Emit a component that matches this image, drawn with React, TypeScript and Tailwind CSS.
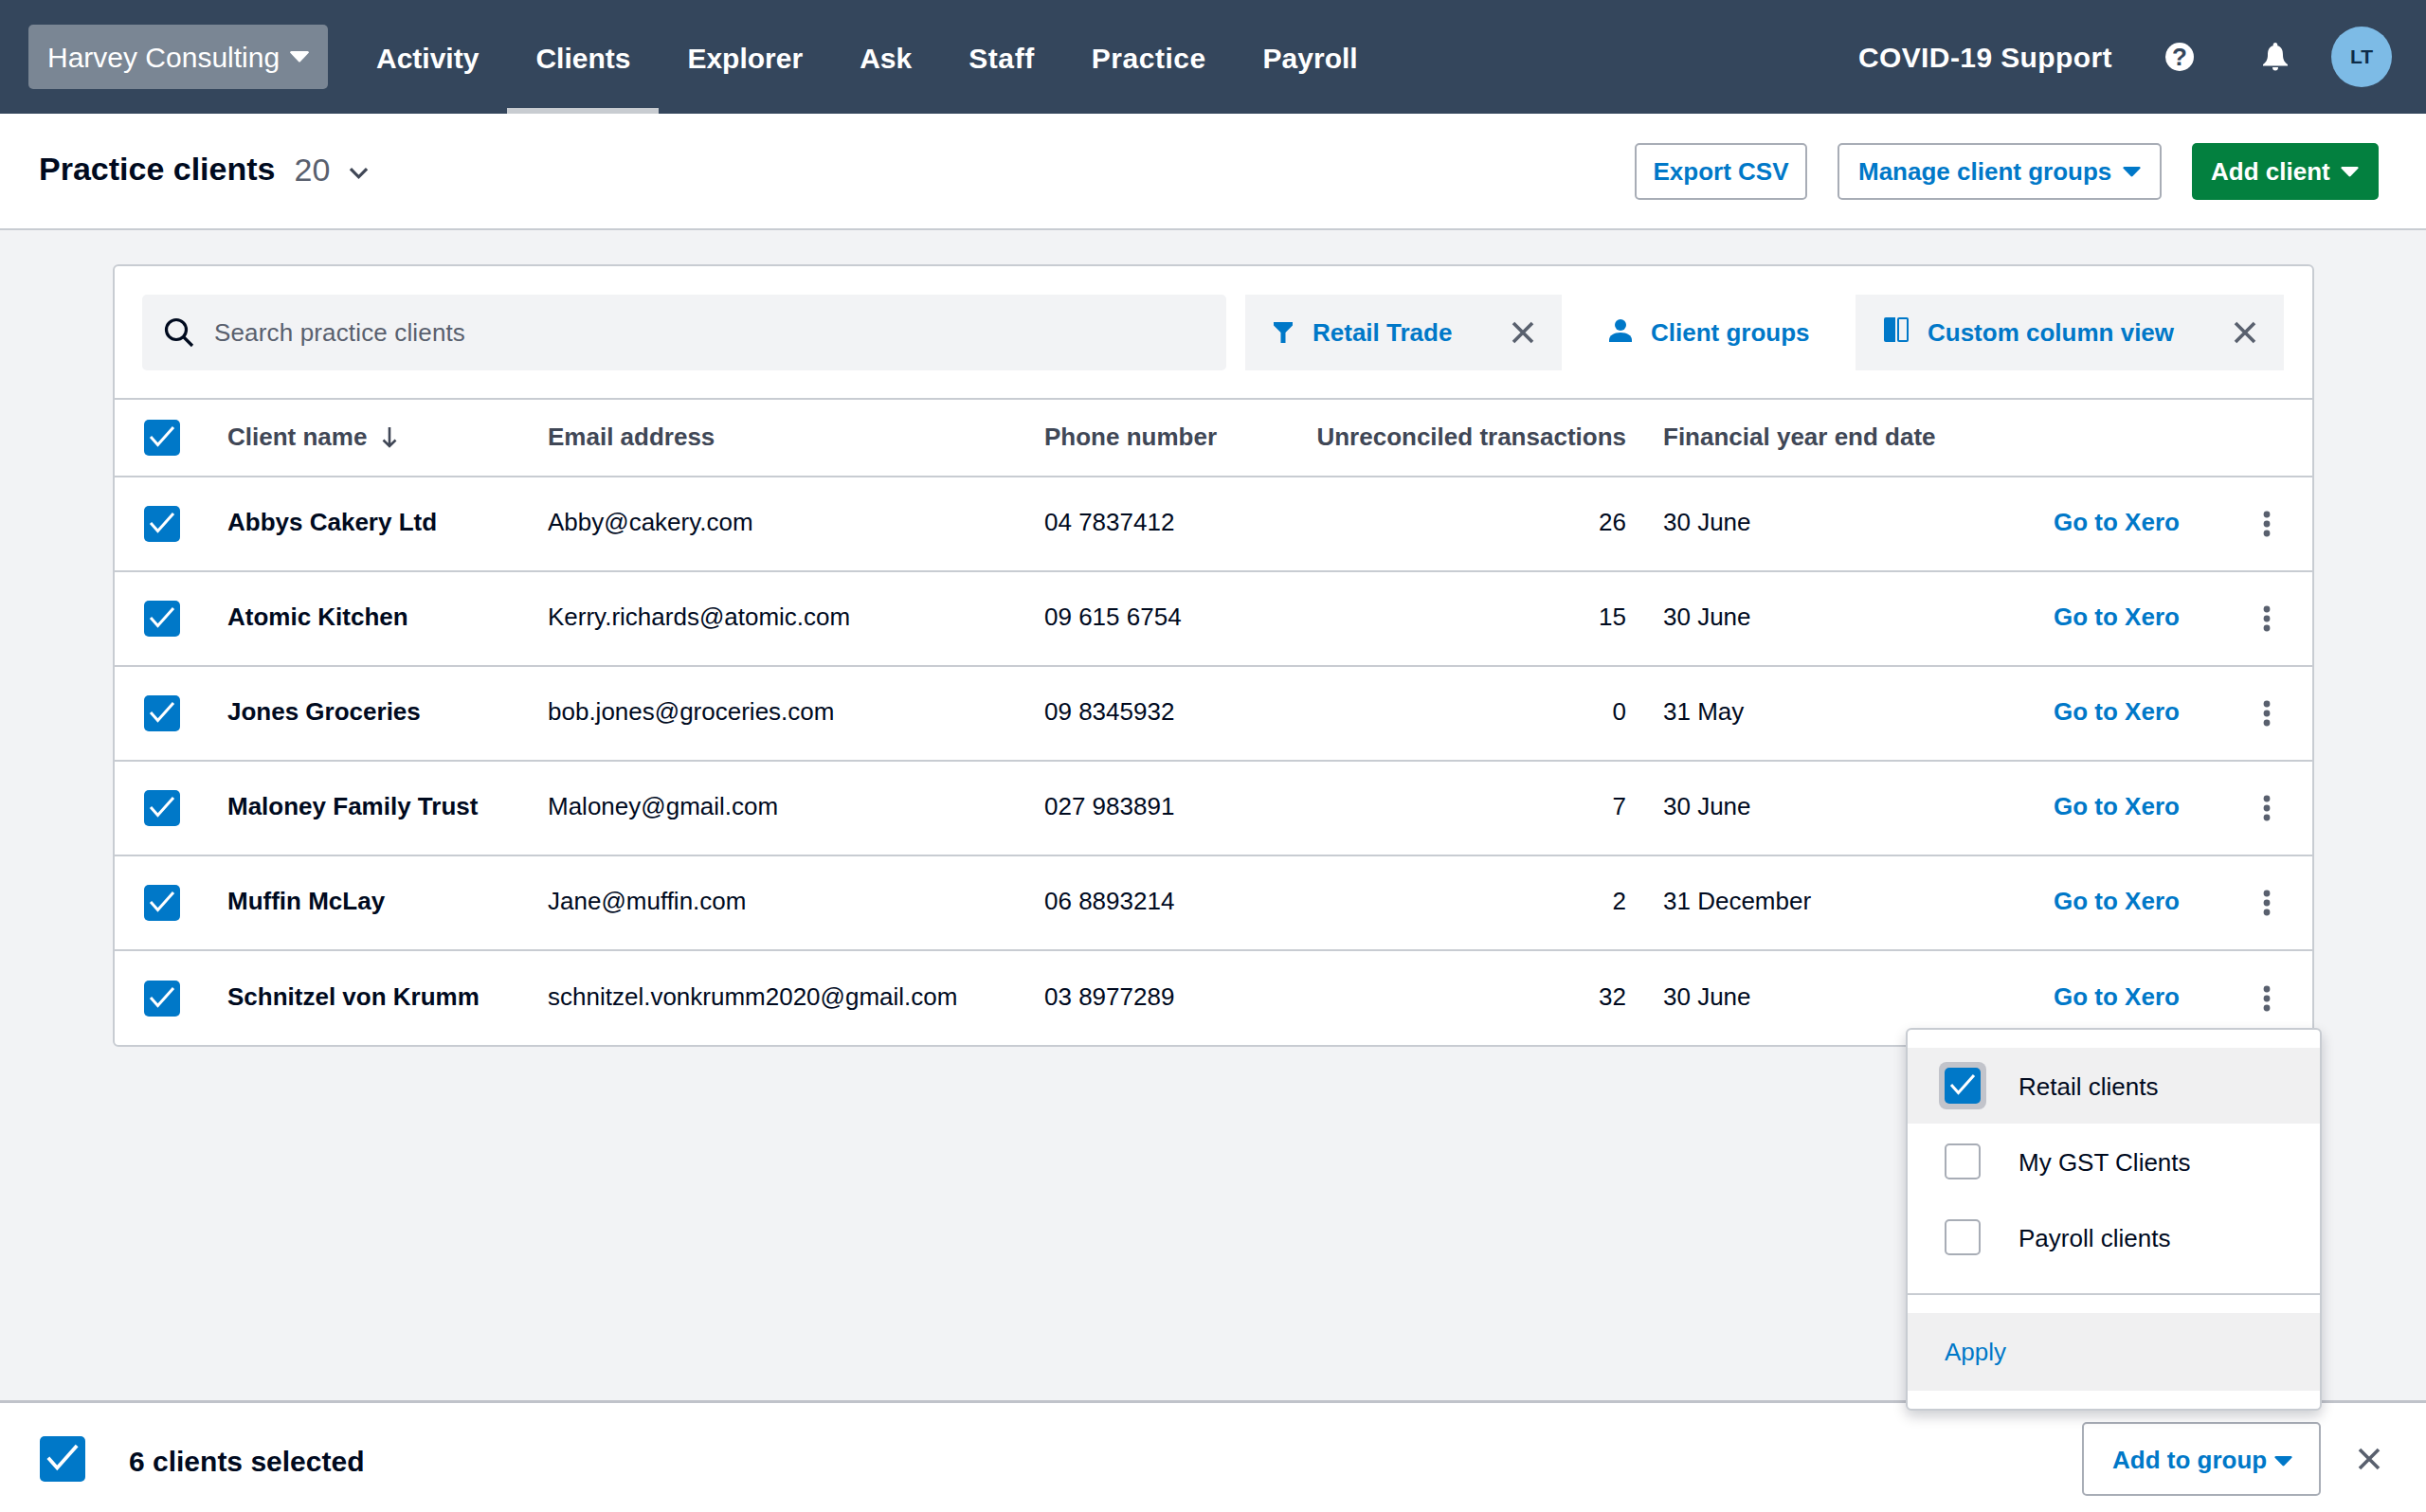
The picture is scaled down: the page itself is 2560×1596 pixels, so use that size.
const rows = [
  { name: "Abbys Cakery Ltd", email: "Abby@cakery.com", phone: "04 7837412", count: 26, yearEnd: "30 June" },
  { name: "Atomic Kitchen", email: "Kerry.richards@atomic.com", phone: "09 615 6754", count: 15, yearEnd: "30 June" },
  { name: "Jones Groceries", email: "bob.jones@groceries.com", phone: "09 8345932", count: 0, yearEnd: "31 May" },
  { name: "Maloney Family Trust", email: "Maloney@gmail.com", phone: "027 983891", count: 7, yearEnd: "30 June" },
  { name: "Muffin McLay", email: "Jane@muffin.com", phone: "06 8893214", count: 2, yearEnd: "31 December" },
  { name: "Schnitzel von Krumm", email: "schnitzel.vonkrumm2020@gmail.com", phone: "03 8977289", count: 32, yearEnd: "30 June" },
];

const NAV_ITEMS = ["Activity", "Clients", "Explorer", "Ask", "Staff", "Practice", "Payroll"];

function Check({ size = 38 }: { size?: number }) {
  return (
    <span
      className="flex shrink-0 items-center justify-center rounded-[5px] bg-[#0078c8]"
      style={{ width: size, height: size }}
    >
      <svg viewBox="0 0 38 38" className="h-full w-full" fill="none">
        <path d="M7 18l7.500 8.500L31 8" stroke="#fff" strokeWidth="3" />
      </svg>
    </span>
  );
}

function Caret({ color = "#fff", className = "" }: { color?: string; className?: string }) {
  return (
    <svg viewBox="0 0 20 12" className={className} fill={color}>
      <path d="M0 1.500Q0 0 1.500 0h17Q20 0 20 1.500L11 11q-1 1-2 0z" />
    </svg>
  );
}

function Close({ className = "" }: { className?: string }) {
  return (
    <svg viewBox="0 0 24 24" className={className} fill="none" stroke="#59606e" strokeWidth="3.600">
      <path d="M2 2l20 20M22 2L2 22" />
    </svg>
  );
}

function Dots() {
  return (
    <svg viewBox="0 0 8 28" className="h-[28px] w-[8px]" fill="#59606e">
      <circle cx="4" cy="4" r="3.400" />
      <circle cx="4" cy="14" r="3.400" />
      <circle cx="4" cy="24" r="3.400" />
    </svg>
  );
}

function GroupOption({ label, checked, active }: { label: string; checked?: boolean; active?: boolean }) {
  return (
    <div className={`flex h-[80px] items-center pl-[39px] ${active ? "bg-[#f0f0f1]" : ""}`}>
      {checked ? (
        <span className="rounded-[8px] bg-[#c2c4cb] p-[6px] -ml-[6px] -mr-[6px]">
          <Check />
        </span>
      ) : (
        <span className="h-[38px] w-[38px] rounded-[5px] border-2 border-[#a8adb6] bg-white" />
      )}
      <span className="ml-[40px] mt-[2px] text-[26px] text-[#000a1e]">{label}</span>
    </div>
  );
}

export default function App() {
  return (
    <div className="relative flex h-[1596px] w-[2560px] flex-col overflow-hidden bg-[#f2f3f5] font-['Liberation_Sans',Arial,sans-serif]">
      <header className="flex h-[120px] shrink-0 items-center bg-[#34465c] text-white">
        <button className="ml-[30px] flex h-[68px] w-[316px] items-center rounded-[5px] bg-[#7a8694] pl-[20px] text-[30px]">
          Harvey Consulting
          <Caret className="ml-[11px] h-[12px] w-[20px]" />
        </button>
        <nav className="ml-[21px] flex h-full">
          {NAV_ITEMS.map((item) => (
            <a
              key={item}
              className={`flex h-full items-center px-[30px] text-[30px] font-bold ${
                item === "Clients" ? "border-b-[6px] border-[#c8ccd1] pt-[8px]" : "pt-[2px]"
              } ${item === "Practice" ? "tracking-[0.5px]" : ""} ${item === "Staff" ? "tracking-[0.6px]" : ""}`}
            >
              {item}
            </a>
          ))}
        </nav>
        <div className="ml-auto flex items-center pr-[36px]">
          <span className="text-[30px] font-bold tracking-[0.4px]">COVID-19 Support</span>
          <span className="ml-[56px] flex h-[30px] w-[30px] items-center justify-center rounded-full bg-white text-[26px] font-bold leading-none text-[#34465c]">
            ?
          </span>
          <svg viewBox="0 0 26 30" className="ml-[73px] h-[30px] w-[26px]" fill="#fff">
            <path d="M13 0c1.500 0 2.300 1 2.300 2.600v.6C20 4.500 21 8.500 21 13c0 5 2 8 5 10v1.500H0V23c3-2 5-5 5-10 0-4.500 1-8.500 5.700-9.800v-.6C10.700 1 11.500 0 13 0z" />
            <path d="M10 26h6c0 2.400-1.200 3.500-3 3.500s-3-1.100-3-3.500z" />
          </svg>
          <span className="ml-[46px] flex h-[64px] w-[64px] items-center justify-center rounded-full bg-[#7dbbe6] text-[21px] font-bold text-[#0d2c48]">
            LT
          </span>
        </div>
      </header>

      <section className="flex h-[123px] shrink-0 items-center border-b-2 border-[#c8ccd2] bg-white pl-[41px] pr-[50px]">
        <h1 className="-mt-[4px] text-[34px] font-bold text-[#000a1e]">Practice clients</h1>
        <span className="ml-[20px] -mt-[2px] text-[34px] text-[#59606e]">20</span>
        <svg viewBox="0 0 22 14" className="ml-[20px] mt-[4px] h-[14px] w-[21px]" fill="none" stroke="#404756" strokeWidth="3.400">
          <path d="M2 2l9 9 9-9" />
        </svg>
        <div className="ml-auto flex items-center gap-[32px] text-[26px] font-bold text-[#0078c8]">
          <button className="h-[60px] w-[182px] rounded-[5px] border-2 border-[#a8adb6] bg-white pt-[2px]">Export CSV</button>
          <button className="flex h-[60px] w-[342px] items-center rounded-[5px] border-2 border-[#a8adb6] bg-white pl-[20px] pt-[2px]">
            Manage client groups
            <Caret color="#0078c8" className="ml-[12px] h-[11px] w-[19px]" />
          </button>
          <button className="flex h-[60px] w-[197px] items-center rounded-[5px] bg-[#03803f] pl-[20px] pt-[2px] text-white">
            Add client
            <Caret className="ml-[11px] h-[11px] w-[19px]" />
          </button>
        </div>
      </section>

      <main className="flex-1 pl-[119px] pt-[36px]">
        <div className="w-[2323px] rounded-[6px] border-2 border-[#c8ccd2] bg-white">
          <div className="flex h-[141px] items-center border-b-2 border-[#c8ccd2] pl-[29px]">
            <div className="flex h-[80px] w-[1144px] items-center rounded-[5px] bg-[#f2f3f5] pl-[23px]">
              <svg viewBox="0 0 32 32" className="h-[32px] w-[32px]" fill="none" stroke="#000a1e" strokeWidth="3.200">
                <circle cx="13" cy="13" r="10.500" />
                <path d="M20.500 20.500L30 30" />
              </svg>
              <span className="ml-[21px] pt-[2px] text-[26px] tracking-[0.15px] text-[#59606e]">Search practice clients</span>
            </div>
            <div className="ml-[20px] flex h-[80px] w-[334px] items-center bg-[#f2f3f5] pl-[30px] text-[26px] font-bold text-[#0078c8]">
              <svg viewBox="0 0 20 22" className="h-[22px] w-[20px]" fill="#0078c8">
                <path d="M0 0h20v3.500L12.500 11v11h-5V11L0 3.500z" />
              </svg>
              <span className="ml-[21px] pt-[2px]">Retail Trade</span>
              <Close className="ml-[63px] h-[24px] w-[24px]" />
            </div>
            <div className="ml-[50px] flex w-[260px] items-center text-[26px] font-bold text-[#0078c8]">
              <svg viewBox="0 0 24 24" className="mb-[4px] h-[24px] w-[24px]" fill="#0078c8">
                <circle cx="12" cy="6" r="6" />
                <path d="M0 24v-2c0-5 5-8 12-8s12 3 12 8v2z" />
              </svg>
              <span className="ml-[20px] pt-[2px]">Client groups</span>
            </div>
            <div className="flex h-[80px] w-[452px] items-center bg-[#f2f3f5] pl-[30px] text-[26px] font-bold text-[#0078c8]">
              <svg viewBox="0 0 26 26" className="mb-[6px] h-[26px] w-[26px]">
                <path d="M2 0h10v26H2a2 2 0 0 1-2-2V2a2 2 0 0 1 2-2z" fill="#0078c8" />
                <rect x="15" y="1" width="10" height="24" rx="1" fill="none" stroke="#0078c8" strokeWidth="2" />
              </svg>
              <span className="ml-[20px] pt-[2px]">Custom column view</span>
              <Close className="ml-[63px] h-[24px] w-[24px]" />
            </div>
          </div>

          <div className="grid h-[82px] grid-cols-[88px_338px_524px_287px_327px_1fr] items-center border-b-2 border-[#c8ccd2] pl-[31px] text-[26px] font-bold text-[#404756]">
            <Check />
            <span className="-mt-[2px] flex items-center">
              Client name
              <svg viewBox="0 0 16 22" className="ml-[16px] mt-[2px] h-[22px] w-[16px]" fill="none" stroke="#404756" strokeWidth="2.600">
                <path d="M8 0v20M1.500 13.500L8 20l6.500-6.500" />
              </svg>
            </span>
            <span className="-mt-[2px]">Email address</span>
            <span className="-mt-[2px]">Phone number</span>
            <span className="-mt-[2px] whitespace-nowrap text-right">Unreconciled transactions</span>
            <span className="-mt-[2px] pl-[39px]">Financial year end date</span>
          </div>

          {rows.map((row, i) => (
            <div
              key={row.name}
              className={`grid grid-cols-[88px_338px_524px_287px_327px_451px_132px_1fr] items-center pl-[31px] text-[26px] text-[#000a1e] ${
                i < rows.length - 1 ? "h-[100px] border-b-2 border-[#c8ccd2]" : "h-[99px]"
              }`}
            >
              <Check />
              <span className="-mt-[3px] font-bold">{row.name}</span>
              <span className="-mt-[3px]">{row.email}</span>
              <span className="-mt-[3px]">{row.phone}</span>
              <span className="-mt-[3px] text-right">{row.count}</span>
              <span className="-mt-[3px] pl-[39px]">{row.yearEnd}</span>
              <a className="-mt-[3px] whitespace-nowrap font-bold text-[#0078c8]">Go to Xero</a>
              <span className="flex pl-[89px]">
                <Dots />
              </span>
            </div>
          ))}
        </div>
      </main>

      <footer className="flex h-[118px] shrink-0 items-center border-t-[3px] border-[#c0c3ca] bg-white pl-[42px] pt-[3px]">
        <Check size={48} />
        <span className="ml-[46px] mt-[4px] text-[30px] font-bold text-[#000a1e]">6 clients selected</span>
        <button className="ml-auto flex h-[78px] w-[252px] items-center rounded-[5px] border-2 border-[#a8adb6] bg-white pl-[30px] pt-[3px] text-[26px] font-bold text-[#0078c8]">
          Add to group
          <Caret color="#0078c8" className="ml-[8px] mt-[2px] h-[11px] w-[19px]" />
        </button>
        <Close className="ml-[39px] mr-[48px] h-[24px] w-[24px]" />
      </footer>

      <div className="absolute bottom-[107px] right-[110px] h-[404px] w-[439px] rounded-[6px] border-2 border-[#c8ccd2] bg-white pt-[19px] shadow-[0_6px_14px_rgba(0,10,30,0.2)]">
        <GroupOption label="Retail clients" checked active />
        <GroupOption label="My GST Clients" />
        <GroupOption label="Payroll clients" />
        <div className="mt-[19px] border-t-2 border-[#c8ccd2] pt-[19px]">
          <div className="flex h-[82px] items-center bg-[#f0f0f1] pl-[39px] text-[26px] text-[#0078c8]">Apply</div>
        </div>
      </div>
    </div>
  );
}
